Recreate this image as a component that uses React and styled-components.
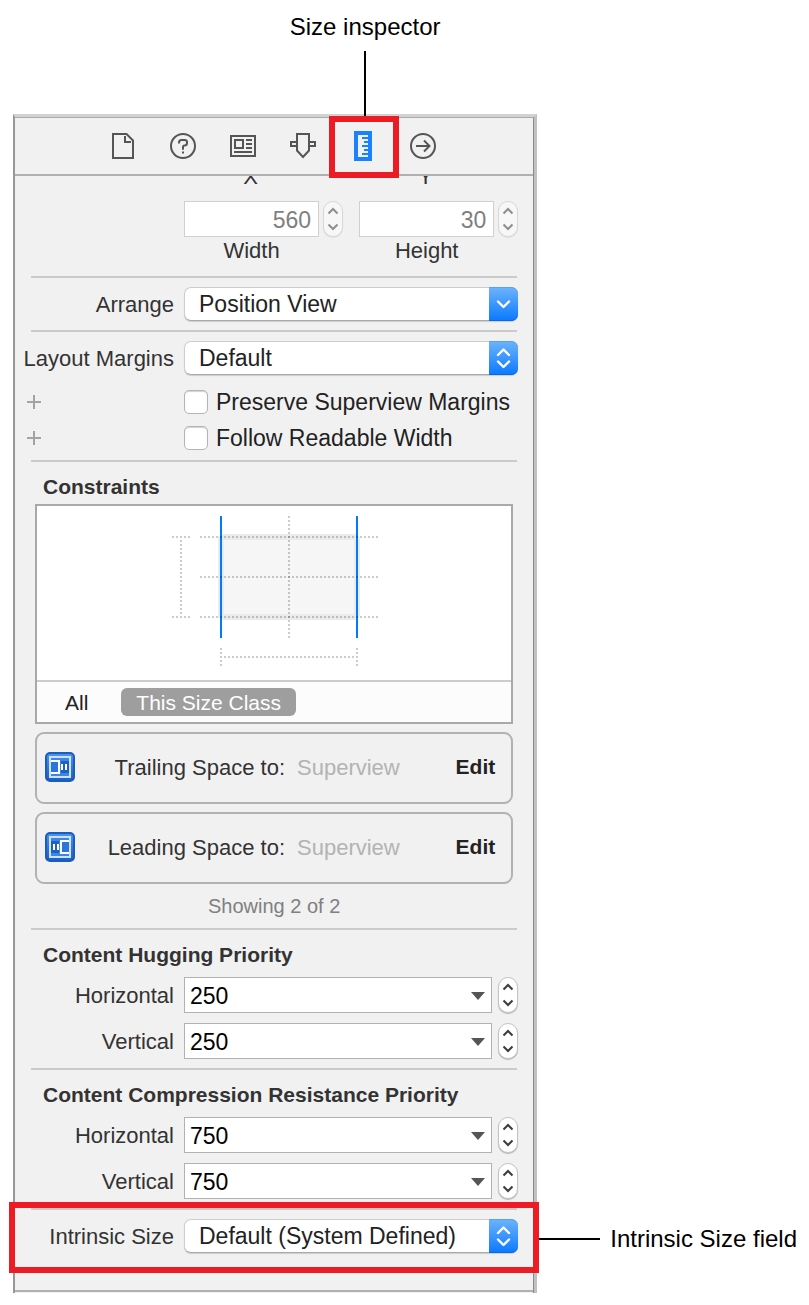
import React from "react";
import styled, { createGlobalStyle } from "styled-components";

const GlobalStyle = createGlobalStyle`
  *, *::before, *::after { box-sizing: border-box; }
  body {
    margin: 0;
    background: #fff;
    color: #333;
    font-family: "Liberation Sans", Arial, sans-serif;
    font-size: 22px;
    line-height: 24px;
  }
  button, input, select { font: inherit; color: inherit; margin: 0; padding: 0; }
  button { background: none; border: 0; cursor: pointer; }
  svg { display: block; }
`;

/* Annotated figure */

const Figure = styled.main`
  display: grid;
  grid-template-columns: minmax(460px, 1fr) auto;
  padding: 13px 12px 12px 13px;
`;

const TopCallout = styled.div`
  grid-column: 1;
  display: flex;
  flex-direction: column;
  align-items: center;
  gap: 10px;
  padding-left: 180px;
  color: #000;
  font-size: 24px;
  line-height: 28px;
`;

const VerticalLeader = styled.span`
  position: relative;
  z-index: 1;
  width: 2px;
  height: 65px;
  margin-bottom: -2px;
  background: #000;
`;

const SideCallout = styled.div`
  grid-column: 2;
  align-self: end;
  display: flex;
  align-items: center;
  gap: 10px;
  padding-bottom: 40px;
  color: #000;
  font-size: 24px;
  line-height: 28px;
  white-space: nowrap;
`;

const HorizontalLeader = styled.span`
  width: 63px;
  height: 2px;
  background: #000;
`;

/* Panel shell */

const Panel = styled.section`
  grid-column: 1;
  background: #f1f1f1;
  border-style: solid;
  border-width: 3px 3px 0 2px;
  border-color: #d2d2d2 #c1c1c1 transparent #979797;
`;

const PanelBody = styled.div`
  border-top: 1px solid #aaa;
  border-right: 1px solid #8b8b8b;
  padding-bottom: 1px;
`;

const TabBar = styled.nav`
  display: flex;
  justify-content: center;
  height: 58px;
  padding-right: 2px;
  border-bottom: 2px solid #b0b0b0;
`;

const Tab = styled.button`
  position: relative;
  display: flex;
  align-items: center;
  justify-content: center;
  width: 60px;
  color: #555;

  ${({ $active }) =>
    $active &&
    `
    color: #1a82ff;
    &::after {
      content: "";
      position: absolute;
      inset: -2px -6px -4px -4px;
      border: 6px solid #ed1c24;
    }
  `}
`;

const Content = styled.div`
  border-bottom: 2px solid #b0b0b0;
`;

const Divider = styled.hr`
  height: 2px;
  margin: 0 16px;
  border: 0;
  background: #cbcbcb;
`;

const Section = styled.div`
  display: grid;
  gap: ${({ $gap = 10 }) => $gap}px;
  padding: ${({ $pad = "9px 0" }) => $pad};
`;

const HighlightedSection = styled.div`
  position: relative;
  padding: 9px 0 37px;

  &::after {
    content: "";
    position: absolute;
    inset: -8px -6px 17px;
    border: 6px solid #ed1c24;
    pointer-events: none;
  }
`;

const Row = styled.div`
  display: grid;
  grid-template-columns: 159px minmax(0, 1fr);
  column-gap: 10px;
  align-items: center;
  padding-right: 15px;
`;

const RowLabel = styled.label`
  padding-top: 2px;
  text-align: right;
  white-space: nowrap;
`;

const Heading = styled.h2`
  margin: 0;
  padding-left: 28px;
  font-size: 21px;
  line-height: 24px;
  font-weight: bold;
`;

/* Frame fields */

const FrameGrid = styled.div`
  grid-column: 2;
  display: grid;
  grid-template-columns: 1fr 1fr;
  column-gap: 16px;
`;

const FrameCell = styled.div`
  display: grid;
  grid-template-columns: minmax(0, 1fr) 20px;
  column-gap: 4px;
  row-gap: 2px;
`;

/* Scrolled under the tab bar: only the lower part of the text shows */
const AxisCell = styled.div`
  display: flex;
  align-items: flex-end;
  justify-content: center;
  height: 13px;
  padding-right: 26px;
  overflow: hidden;
`;

const CellLabel = styled.label`
  text-align: center;
`;

const NumberInput = styled.input`
  width: 100%;
  height: 36px;
  padding: 2px 7px 0;
  border: 1px solid #d0d0d0;
  background: #fff;
  color: #7f7f7f;
  font-size: 23px;
  text-align: right;
`;

const StepperBox = styled.div`
  display: flex;
  flex-direction: column;
  width: 20px;
  height: 36px;
  padding: 1px 0;
  border: 1px solid ${({ $muted }) => ($muted ? "#d8d8d8" : "#c4c4c4")};
  border-radius: 10px;
  background: ${({ $muted }) => ($muted ? "#f7f7f7" : "#fff")};
  box-shadow: 0 1px 1px rgba(0, 0, 0, ${({ $muted }) => ($muted ? 0.08 : 0.25)});
  color: ${({ $muted }) => ($muted ? "#8e8e8e" : "#3c3c3c")};
`;

const StepButton = styled.button`
  flex: 1;
  display: flex;
  align-items: center;
  justify-content: center;
`;

/* Pop-up menus */

const SelectBox = styled.div`
  position: relative;
`;

const Select = styled.select`
  display: block;
  width: 100%;
  height: 34px;
  padding: 0 32px 0 14px;
  appearance: none;
  border: 1px solid #cdcdcd;
  border-bottom-color: #a9a9a9;
  border-radius: 7px;
  background: #fff;
  box-shadow: 0 1px 1px rgba(0, 0, 0, 0.15);
  color: #222;
  font-size: 23px;
  line-height: 30px;
`;

const SelectChip = styled.span`
  position: absolute;
  top: 0;
  right: 0;
  display: flex;
  align-items: center;
  justify-content: center;
  width: 29px;
  height: 34px;
  border-radius: 0 7px 7px 0;
  background: linear-gradient(#6db4fb, #0a79ff);
  box-shadow: inset 0 1px 0 #5aa2f0, inset 0 -1px 0 #0a66ee;
  pointer-events: none;
`;

/* Check boxes */

const AddButton = styled.button`
  justify-self: start;
  margin-left: 12px;
  color: #a3a3a3;
`;

const CheckLabel = styled.label`
  display: flex;
  align-items: center;
  gap: 8px;
  color: #222;
  font-size: 23px;
  white-space: nowrap;
`;

const CheckBox = styled.input`
  flex: none;
  width: 24px;
  height: 24px;
  appearance: none;
  border: 1px solid #b4b4b4;
  border-radius: 5px;
  background: #fff;
  box-shadow: inset 0 1px 1px rgba(0, 0, 0, 0.18);
`;

/* Constraints */

const ConstraintBlock = styled.div`
  display: grid;
  gap: 8px;
  padding: 0 20px;
`;

const Preview = styled.div`
  border: 2px solid #a9a9a9;
  background: #fff;
`;

const PreviewCanvas = styled.div`
  display: flex;
  justify-content: center;
`;

const ScopeBar = styled.div`
  display: flex;
  align-items: center;
  gap: 18px;
  height: 42px;
  padding-left: 13px;
  border-top: 2px solid #ccc;
  background: #fcfcfc;
`;

const ScopeButton = styled.button`
  height: 28px;
  padding: 2px 15px 0;
  border-radius: 6px;
  background: ${({ $active }) => ($active ? "#9e9e9e" : "transparent")};
  color: ${({ $active }) => ($active ? "#fff" : "#222")};
  font-size: 21px;
`;

const Card = styled.div`
  display: grid;
  grid-template-columns: 30px 198px minmax(0, 1fr) auto;
  column-gap: 12px;
  align-items: center;
  height: 72px;
  padding: 0 16px 2px 8px;
  border: 2px solid #b2b2b2;
  border-radius: 9px;
`;

const CardLabel = styled.span`
  padding-top: 2px;
  text-align: right;
  white-space: nowrap;
`;

const CardTarget = styled.span`
  padding-top: 2px;
  color: #b3b3b3;
`;

const EditButton = styled.button`
  color: #222;
  font-size: 21px;
  font-weight: bold;
`;

const Summary = styled.p`
  margin: 0;
  color: #808080;
  font-size: 20px;
  text-align: center;
`;

/* Priorities */

const PriorityField = styled.div`
  display: grid;
  grid-template-columns: minmax(0, 1fr) 20px;
  column-gap: 6px;
`;

const Combo = styled.div`
  display: flex;
  height: 36px;
  border: 1px solid #b2b2b2;
  background: #fff;
`;

const ComboInput = styled.input`
  flex: 1;
  min-width: 0;
  padding: 2px 0 0 5px;
  border: 0;
  background: transparent;
  color: #000;
  font-size: 23px;
`;

const ComboButton = styled.button`
  display: flex;
  align-items: center;
  justify-content: center;
  width: 26px;
  padding-top: 2px;
  color: #555;
`;

/* Icons */

const Icon = ({ children }) => (
  <svg width="30" height="30" viewBox="0 0 30 30" fill="none" stroke="currentColor" strokeWidth="2" aria-hidden="true">
    {children}
  </svg>
);

const FileIcon = () => (
  <Icon>
    <path d="M5 3H18.5L25 9.5V27H5Z" />
    <path d="M17 5V11H23" />
  </Icon>
);

const HelpIcon = () => (
  <Icon>
    <circle cx="15" cy="15" r="12" />
    <path d="M11 12.5V11.5Q11 9 13.5 9H16.5Q19 9 19 11V12Q19 14.5 16.5 14.5Q15 14.5 15 16V18.7" />
    <path d="M14 21.5H16" />
  </Icon>
);

const IdentityIcon = () => (
  <Icon>
    <rect x="3" y="5" width="24" height="20" />
    <rect x="7" y="9" width="8" height="8" />
    <path d="M18 9H24M18 13H24M18 17H24M6 21H24" />
  </Icon>
);

const AttributesIcon = () => (
  <Icon>
    <path d="M9 3H21V19.5L15 26L9 19.5Z" />
    <path d="M9 11H3V15H9M21 11H27V15H21" />
  </Icon>
);

const SizeIcon = () => (
  <Icon>
    <rect x="8" y="2" width="14" height="26" strokeWidth="4" />
    <path d="M14 7H20M16 11H20M14 15H20M16 19H20M14 23H20" />
  </Icon>
);

const ConnectionsIcon = () => (
  <Icon>
    <circle cx="15" cy="15" r="12" />
    <path d="M8 15H21.5M16 9.5L21.5 15L16 20.5" />
  </Icon>
);

const Chevron = ({ up }) => (
  <svg width="12" height="8" viewBox="0 0 12 8" fill="none" stroke="currentColor" strokeWidth="2" aria-hidden="true">
    <path d={up ? "M1.5 6.5L6 2L10.5 6.5" : "M1.5 1.5L6 6L10.5 1.5"} />
  </svg>
);

const MenuArrow = ({ pull }) => (
  <svg width="15" height="24" viewBox="0 0 15 24" fill="none" stroke="#fff" strokeWidth="2.4" strokeLinecap="round" strokeLinejoin="round" aria-hidden="true">
    <path d={pull ? "M2 9.5L7.5 15L13 9.5" : "M2 9L7.5 3.5L13 9M2 15.5L7.5 21L13 15.5"} />
  </svg>
);

const PlusIcon = () => (
  <svg width="14" height="14" viewBox="0 0 14 14" stroke="currentColor" strokeWidth="2" aria-hidden="true">
    <path d="M7 0V14M0 7H14" />
  </svg>
);

const Triangle = () => (
  <svg width="14" height="8" viewBox="0 0 14 8" fill="currentColor" aria-hidden="true">
    <path d="M0 0H14L7 8Z" />
  </svg>
);

const BadgeIcon = ({ leading }) => {
  const id = leading ? "badge-leading" : "badge-trailing";
  return (
    <svg width="30" height="30" viewBox="0 0 30 30" aria-hidden="true">
      <defs>
        <linearGradient id={id} x1="0" y1="0" x2="0" y2="1">
          <stop offset="0" stopColor="#4a96f3" />
          <stop offset="1" stopColor="#155fc6" />
        </linearGradient>
      </defs>
      <rect x="1" y="1" width="28" height="28" rx="4" fill={`url(#${id})`} stroke="#1d5cb8" strokeWidth="2" />
      <rect x="5" y="5" width="20" height="20" fill="#3d86e8" stroke="#cfe1f8" strokeWidth="2" />
      <g transform={leading ? "translate(30 0) scale(-1 1)" : undefined}>
        <path d="M16 9H24V21H16Z" fill="#1f62bd" />
        <path d="M6 9H14V21H6" fill="#2c76d8" stroke="#fff" strokeWidth="2" />
        <path d="M17 12V18M21 12V18" stroke="#fff" strokeWidth="2" />
      </g>
    </svg>
  );
};

const ConstraintDrawing = () => (
  <svg width="208" height="174" viewBox="0 0 208 174" fill="none" strokeWidth="2" aria-hidden="true">
    <rect x="51" y="31" width="136" height="80" rx="2" fill="#f6f6f6" stroke="#ebebeb" strokeWidth="6" />
    <path d="M51 10V132M187 10V132" stroke="#007aff" />
    <g stroke="#000" strokeOpacity="0.2" strokeDasharray="2 2">
      <path d="M2 31H20" />
      <path d="M2 111H20" />
      <path d="M11 34V110" />
      <path d="M30 31H208" />
      <path d="M30 71H208" />
      <path d="M30 111H208" />
      <path d="M119 10V132" />
      <path d="M51 142V160" />
      <path d="M187 142V160" />
      <path d="M54 151H186" />
    </g>
  </svg>
);

/* Composite parts */

const Stepper = ({ name, muted }) => (
  <StepperBox $muted={muted}>
    <StepButton type="button" aria-label={`Increase ${name}`}>
      <Chevron up />
    </StepButton>
    <StepButton type="button" aria-label={`Decrease ${name}`}>
      <Chevron />
    </StepButton>
  </StepperBox>
);

const FrameField = ({ id, label, value }) => (
  <FrameCell>
    <NumberInput id={id} defaultValue={value} />
    <Stepper name={label} muted />
    <CellLabel htmlFor={id}>{label}</CellLabel>
  </FrameCell>
);

const MenuRow = ({ id, label, value, pull }) => (
  <Row>
    <RowLabel htmlFor={id}>{label}</RowLabel>
    <SelectBox>
      <Select id={id} defaultValue={value}>
        <option>{value}</option>
      </Select>
      <SelectChip>
        <MenuArrow pull={pull} />
      </SelectChip>
    </SelectBox>
  </Row>
);

const CheckRow = ({ label }) => (
  <Row>
    <AddButton type="button" aria-label={`Add variation for ${label}`}>
      <PlusIcon />
    </AddButton>
    <CheckLabel>
      <CheckBox type="checkbox" />
      {label}
    </CheckLabel>
  </Row>
);

const ConstraintCard = ({ label, target, leading }) => (
  <Card>
    <BadgeIcon leading={leading} />
    <CardLabel>{label}</CardLabel>
    <CardTarget>{target}</CardTarget>
    <EditButton type="button">Edit</EditButton>
  </Card>
);

const PriorityRow = ({ id, label, value }) => (
  <Row>
    <RowLabel htmlFor={id}>{label}</RowLabel>
    <PriorityField>
      <Combo>
        <ComboInput id={id} defaultValue={value} />
        <ComboButton type="button" aria-label={`${label} presets`}>
          <Triangle />
        </ComboButton>
      </Combo>
      <Stepper name={label} />
    </PriorityField>
  </Row>
);

const tabs = [
  ["File", FileIcon],
  ["Quick Help", HelpIcon],
  ["Identity", IdentityIcon],
  ["Attributes", AttributesIcon],
  ["Size", SizeIcon],
  ["Connections", ConnectionsIcon],
];

export default function App() {
  return (
    <>
      <GlobalStyle />
      <Figure>
        <TopCallout>
          Size inspector
          <VerticalLeader />
        </TopCallout>

        <Panel>
          <PanelBody>
            <TabBar>
              {tabs.map(([name, Glyph]) => (
                <Tab key={name} type="button" aria-label={`${name} inspector`} $active={name === "Size"}>
                  <Glyph />
                </Tab>
              ))}
            </TabBar>

            <Content>
              <Section $gap={12} $pad="0 0 13px">
                <Row>
                  <FrameGrid>
                    <AxisCell>X</AxisCell>
                    <AxisCell>Y</AxisCell>
                  </FrameGrid>
                </Row>
                <Row>
                  <FrameGrid>
                    <FrameField id="width" label="Width" value="560" />
                    <FrameField id="height" label="Height" value="30" />
                  </FrameGrid>
                </Row>
              </Section>

              <Divider />
              <Section>
                <MenuRow id="arrange" label="Arrange" value="Position View" pull />
              </Section>

              <Divider />
              <Section $gap={15} $pad="9px 0 10px">
                <MenuRow id="margins" label="Layout Margins" value="Default" />
                <Section $gap={12} $pad="0">
                  <CheckRow label="Preserve Superview Margins" />
                  <CheckRow label="Follow Readable Width" />
                </Section>
              </Section>

              <Divider />
              <Section $gap={5} $pad="13px 0 10px">
                <Heading>Constraints</Heading>
                <Section $gap={10} $pad="0">
                  <ConstraintBlock>
                    <Preview>
                      <PreviewCanvas>
                        <ConstraintDrawing />
                      </PreviewCanvas>
                      <ScopeBar>
                        <ScopeButton type="button">All</ScopeButton>
                        <ScopeButton type="button" $active>
                          This Size Class
                        </ScopeButton>
                      </ScopeBar>
                    </Preview>
                    <ConstraintCard label="Trailing Space to:" target="Superview" />
                    <ConstraintCard label="Leading Space to:" target="Superview" leading />
                  </ConstraintBlock>
                  <Summary>Showing 2 of 2</Summary>
                </Section>
              </Section>

              <Divider />
              <Section $pad="13px 0 9px">
                <Heading>Content Hugging Priority</Heading>
                <PriorityRow id="hug-h" label="Horizontal" value="250" />
                <PriorityRow id="hug-v" label="Vertical" value="250" />
              </Section>

              <Divider />
              <Section $pad="13px 0 9px">
                <Heading>Content Compression Resistance Priority</Heading>
                <PriorityRow id="comp-h" label="Horizontal" value="750" />
                <PriorityRow id="comp-v" label="Vertical" value="750" />
              </Section>

              <Divider />
              <HighlightedSection>
                <MenuRow id="intrinsic" label="Intrinsic Size" value="Default (System Defined)" />
              </HighlightedSection>
            </Content>
          </PanelBody>
        </Panel>

        <SideCallout>
          <HorizontalLeader />
          Intrinsic Size field
        </SideCallout>
      </Figure>
    </>
  );
}
